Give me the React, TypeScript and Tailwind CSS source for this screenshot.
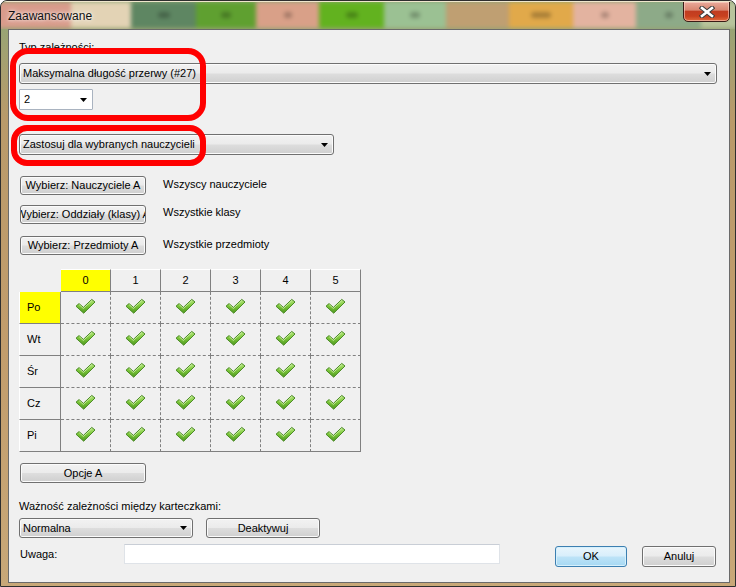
import React from "react";

const days = ["Po", "Wt", "Śr", "Cz", "Pi"];
const cols = [0, 1, 2, 3, 4, 5];

const blocks: { w: string; c: string; blob?: string }[] = [
  { w: "w-[76px]", c: "bg-[#d99b8b]" },
  { w: "w-[60px]", c: "bg-[#e3d3b5]" },
  { w: "w-[65px]", c: "bg-[#5e8662]", blob: "w-[12px]" },
  { w: "w-[60px]", c: "bg-[#5fa030]", blob: "w-[10px]" },
  { w: "w-[63px]", c: "bg-[#d9a088]", blob: "w-[8px]" },
  { w: "w-[65px]", c: "bg-[#62b21f]", blob: "w-[12px]" },
  { w: "w-[62px]", c: "bg-[#9bc193]", blob: "w-[10px]" },
  { w: "w-[63px]", c: "bg-[#bf9f72]" },
  { w: "w-[64px]", c: "bg-[#e1a94a]", blob: "w-[20px]" },
  { w: "w-[63px]", c: "bg-[#e3b3a0]", blob: "w-[8px]" },
  { w: "w-[65px]", c: "bg-[#8daa88]", blob: "w-[8px]" },
  { w: "w-[50px]", c: "bg-[#b8c49c]" },
];

function Arrow() {
  return (
    <svg width="7" height="4" viewBox="0 0 7 4" className="shrink-0">
      <path d="M0 0H7L3.5 4Z" fill="#000" />
    </svg>
  );
}

function Check() {
  return (
    <svg width="21" height="17" viewBox="0 0 21 17" className="-mt-[2px]">
      <path
        d="M1 8.2 L4 5.6 L8.4 9.4 L16.8 1.4 L20 4 L8.7 15.2 Z"
        fill="url(#chkG)"
        stroke="#4a8a25"
        strokeWidth="1"
        strokeLinejoin="round"
      />
      <path d="M4.2 6.7 L8.4 10.5 L16.8 2.6" fill="none" stroke="#d9f5b4" strokeWidth="0.9" opacity="0.85" />
    </svg>
  );
}

const btnCls =
  "flex items-center justify-center overflow-hidden whitespace-nowrap rounded-[3px] border border-[#707070] bg-[linear-gradient(#f2f2f2_0%,#ebebeb_48%,#dddddd_52%,#cfcfcf_100%)] shadow-[inset_0_0_0_1px_#fbfbfb] text-[11px] leading-[13px] text-black";

const comboCls =
  "flex items-center justify-between whitespace-nowrap rounded-[3px] border border-[#707070] bg-[linear-gradient(#f2f2f2_0%,#ebebeb_48%,#dddddd_52%,#cfcfcf_100%)] shadow-[inset_0_0_0_1px_#fbfbfb] text-[11px] leading-[13px] text-black pl-[3px] pr-[5px]";

export default function App() {
  return (
    <div className="w-[736px] h-[587px] flex flex-col overflow-hidden rounded-t-[7px] border border-[#2e2e2e] bg-[linear-gradient(#8fa777_0%,#b99a6a_20%,#c29d6c_60%,#c8a878_100%)] font-['Liberation_Sans',Arial,sans-serif]">
      <svg width="0" height="0" className="absolute">
        <defs>
          <linearGradient id="chkG" x1="0" y1="0" x2="0" y2="1">
            <stop offset="0" stopColor="#b8e783" />
            <stop offset="0.45" stopColor="#7fc93c" />
            <stop offset="1" stopColor="#4f9a1f" />
          </linearGradient>
        </defs>
      </svg>

      {/* title bar */}
      <div className="relative h-[28px] shrink-0 overflow-hidden border-t border-t-[#efe6cc] flex items-center">
        <div className="absolute left-[-6px] right-[-6px] top-0 bottom-[1px] flex blur-[2px]">
          {blocks.map((b, i) => (
            <div key={i} className={`${b.w} ${b.c} h-full shrink-0 flex items-center justify-center`}>
              {b.blob ? <div className={`${b.blob} h-[6px] rounded-full bg-black/25`} /> : null}
            </div>
          ))}
        </div>
        <span className="relative ml-[7px] mt-[1px] text-[12px] text-[#111] [text-shadow:0_0_6px_rgba(255,255,255,0.9),0_0_3px_rgba(255,255,255,0.8)]">
          Zaawansowane
        </span>
        <div className="absolute right-[5px] top-[-1px] w-[47px] h-[21px] rounded-b-[5px] border border-[#3b1c16] bg-[linear-gradient(#e9aa9b_0%,#d98670_42%,#c13c20_50%,#c8411f_75%,#e06a3c_100%)] shadow-[inset_0_0_0_1px_rgba(255,220,210,0.55)] flex items-center justify-center">
          <svg width="16" height="12" viewBox="0 0 16 12">
            <path d="M3 2 L13 10 M13 2 L3 10" stroke="#3d3d3d" strokeWidth="4.6" strokeLinecap="square" />
            <path d="M3 2 L13 10 M13 2 L3 10" stroke="#ffffff" strokeWidth="2.6" strokeLinecap="square" />
          </svg>
        </div>
      </div>

      {/* body */}
      <div className="flex-1 flex pl-[7px] pr-[5px] pb-[3px]">
        <div className="relative flex-1 border border-[#6a6a6a] bg-[#f0f0f0] pl-[10px] pt-[11px] flex flex-col items-start text-[11px] leading-[13px] text-black">
          <div>Typ zależności:</div>

          <div className={`${comboCls} mt-[9px] w-[698px] h-[21px]`}>
            <span>Maksymalna długość przerwy (#27)</span>
            <Arrow />
          </div>

          <div className="mt-[5px] w-[74px] h-[21px] flex items-center justify-between border border-[#a9b3c0] bg-white pl-[4px] pr-[5px] rounded-[1px]">
            <span>2</span>
            <Arrow />
          </div>

          <div className={`${comboCls} mt-[24px] w-[315px] h-[21px]`}>
            <span>Zastosuj dla wybranych nauczycieli</span>
            <Arrow />
          </div>

          <div className="mt-[21px] ml-[1px] flex items-center">
            <div className={`${btnCls} w-[126px] h-[19px]`}>Wybierz: Nauczyciele A</div>
            <span className="ml-[17px] -mt-[2px]">Wszyscy nauczyciele</span>
          </div>
          <div className="mt-[10px] ml-[1px] flex items-center">
            <div className={`${btnCls} w-[126px] h-[19px]`}>Wybierz: Oddziały (klasy) A</div>
            <span className="ml-[17px] -mt-[4px]">Wszystkie klasy</span>
          </div>
          <div className="mt-[12px] ml-[1px] flex items-center">
            <div className={`${btnCls} w-[126px] h-[19px]`}>Wybierz: Przedmioty A</div>
            <span className="ml-[17px] -mt-[2px]">Wszystkie przedmioty</span>
          </div>

          {/* grid */}
          <div className="mt-[14px] grid grid-cols-[42px_repeat(6,50px)] grid-rows-[23px_repeat(5,32px)]">
            <div />
            {cols.map((c) => (
              <div
                key={c}
                className={`flex items-center justify-center border-r border-b border-[#808080] border-t border-t-white ${
                  c === 0 ? "bg-[#ffff00] border-t-[#ffff00]" : ""
                }`}
              >
                {c}
              </div>
            ))}
            {days.map((d, r) => (
              <React.Fragment key={d}>
                <div
                  className={`flex items-center pl-[7px] border-l border-l-white border-r border-b border-r-[#808080] border-b-[#808080] ${
                    r === 0 ? "bg-[#ffff00]" : ""
                  }`}
                >
                  {d}
                </div>
                {cols.map((c) => (
                  <div
                    key={c}
                    className={`flex items-center justify-center border-r border-b border-dashed border-[#808080] ${
                      c === 5 ? "[border-right-style:solid]" : ""
                    } ${r === 4 ? "[border-bottom-style:solid]" : ""}`}
                  >
                    <Check />
                  </div>
                ))}
              </React.Fragment>
            ))}
          </div>

          <div className={`${btnCls} mt-[11px] ml-[1px] w-[126px] h-[20px]`}>Opcje A</div>

          <div className="mt-[17px]">Ważność zależności między karteczkami:</div>

          <div className="mt-[5px] flex items-center">
            <div className={`${comboCls} w-[174px] h-[20px]`}>
              <span>Normalna</span>
              <Arrow />
            </div>
            <div className={`${btnCls} ml-[13px] w-[114px] h-[20px]`}>Deaktywuj</div>
          </div>

          <div className="mt-[6px] flex items-start">
            <div className="w-[105px] pl-[1px] h-[20px] flex items-center">Uwaga:</div>
            <div className="w-[376px] h-[20px] border border-[#dfe3e8] border-t-[#c9ced6] bg-white" />
            <div className="ml-[55px] mt-[2px] w-[72px] h-[21px] flex items-center justify-center rounded-[3px] border border-[#3c7fb1] bg-[linear-gradient(#e8f5fc_0%,#d8eefb_48%,#bde3f7_52%,#a6d8f3_100%)] shadow-[inset_0_0_0_1px_#d6f0fc] text-[11px]">
              OK
            </div>
            <div className={`${btnCls} ml-[15px] mt-[2px] w-[74px] h-[21px]`}>Anuluj</div>
          </div>

          {/* red annotations */}
          <div className="absolute left-[1px] top-[18px] w-[196px] h-[73px] rounded-[18px] border-[6px] border-[#ff0000] pointer-events-none" />
          <div className="absolute left-[2px] top-[95px] w-[195px] h-[41px] rounded-[16px] border-[6px] border-[#ff0000] pointer-events-none" />
        </div>
      </div>
    </div>
  );
}
